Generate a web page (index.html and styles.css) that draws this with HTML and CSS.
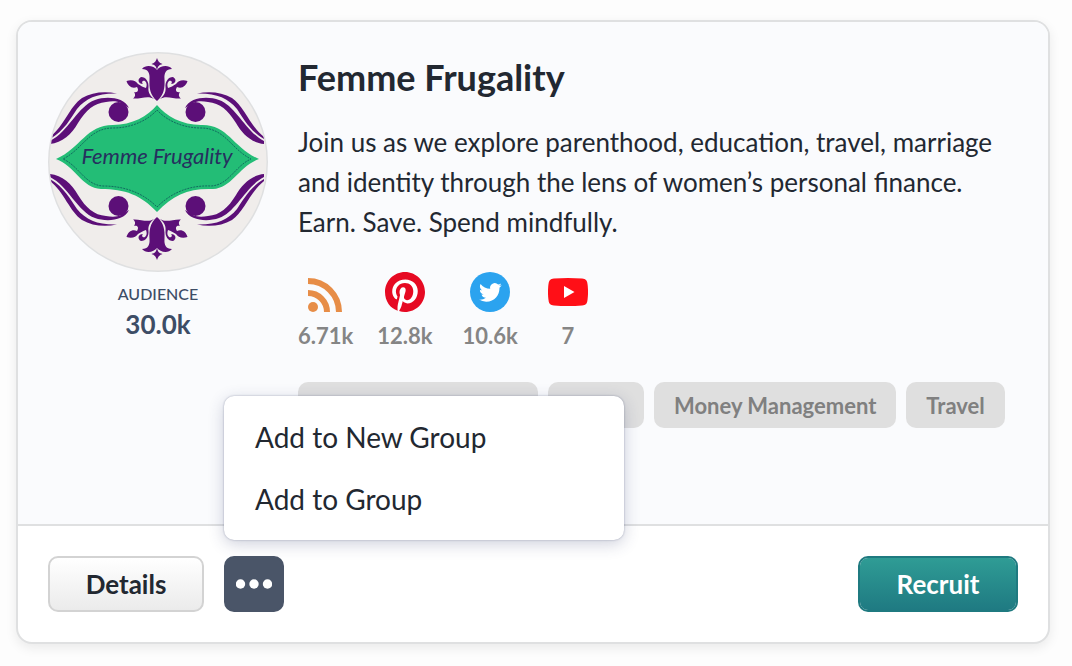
FILE: index.html
```html
<!DOCTYPE html>
<html lang="en">
<head>
<meta charset="utf-8">
<title>Femme Frugality</title>
<link rel="stylesheet" href="styles.css">
</head>
<body>
<article class="card">
  <div class="card-main">
    <aside class="profile">
      <svg class="avatar" viewBox="0 0 220 220" role="img" aria-label="Femme Frugality logo">
        <defs>
          <clipPath id="disc"><circle cx="110" cy="110" r="108.500"/></clipPath>
          <g id="quarter">
            <path d="M69 41.500C57 39 44 40 34 46C22 54 16 74 2 85V87C16 79 23 66 29 57C38 46 50 41 69 41.500Z"/>
            <path d="M81 56C76 45 58 44 47 48C30 54 20 80 2 89V92C14 91 24 82 30 71C38 58 46 51 58 50C64 49 69 49 73 51Z"/>
            <circle cx="70.500" cy="60" r="10"/>
            <path d="M109 6C108 9 107 11 103.500 12C107 13 108 14 109 18Z"/>
            <path d="M109 18C106 14 98 12 94 17C100 17 102 21 101.500 27C101 36 102 43 109 49Z"/>
            <path d="M106 47C100 43 93 47 85 46.500C87 45 88 43 86 40C90 41 91 38 89 35C84 37 80 34 78.500 29C84 27 88 29 90 32C93 34 95 35 98 36C99 33 99 31 97 29C95 28 93 30 95 32C90 32 89 27 93 25C98 25 101 30 100.500 35C100 39 101 43 106 47Z"/>
          </g>
          <g id="half">
            <use href="#quarter"/>
            <use href="#quarter" transform="translate(218 0) scale(-1 1)"/>
          </g>
        </defs>
        <circle cx="110" cy="110" r="110" fill="#dfe0e1"/>
        <g clip-path="url(#disc)">
          <rect width="220" height="220" fill="#f0edeb"/>
          <g fill="#5c0f78">
            <use href="#half"/>
            <use href="#half" transform="translate(0 214) scale(1 -1)"/>
          </g>
          <path fill="#23bd76" d="M109 53C118 64 134 73 153 73C180 72 185 96 211 107C191 114 184 136 165 137C141 136 125 143 109 160C93 143 77 137 53 137C34 136 27 114 8 107C33 96 38 73 65 73C84 73 100 64 109 53Z"/>
          <path class="stitch" d="M109 58C118 68 134 76 153 76C177 76 183 97 203 107C187 114 181 133 163 134C141 133 123 141 109 155C95 141 77 134 55 134C37 133 31 114 15 107C35 97 41 76 65 76C84 76 100 68 109 58Z"/>
        </g>
        <text class="avatar-text" x="109" y="112" text-anchor="middle">Femme Frugality</text>
      </svg>
      <div class="audience-label">AUDIENCE</div>
      <div class="audience-value">30.0k</div>
    </aside>
    <div class="content">
      <h1 class="title">Femme Frugality</h1>
      <p class="description">Join us as we explore parenthood, education, travel, marriage and identity through the lens of women’s personal finance. Earn. Save. Spend mindfully.</p>
      <ul class="stats">
        <li class="stat">
          <svg class="stat-icon" viewBox="0 0 40 40" aria-label="Blog">
            <g fill="none" stroke="#e78d47" stroke-width="6"><path d="M2 21A19 19 0 0 1 21 40"/><path d="M2 9A31 31 0 0 1 33 40"/></g>
            <circle cx="7" cy="35" r="5" fill="#e78d47"/>
          </svg>
          <span>6.71k</span>
        </li>
        <li class="stat">
          <svg class="stat-icon" viewBox="0 0 496 496" aria-label="Pinterest">
            <circle cx="248" cy="248" r="244" fill="#fff"/>
            <path fill="#e60a23" d="M496 248c0 137-111 248-248 248-25.600 0-50.200-3.900-73.400-11.100 10.100-16.500 25.200-43.500 30.800-65 3-11.600 15.400-59 15.400-59 8.100 15.400 31.700 28.500 56.800 28.500 74.800 0 128.700-68.800 128.700-154.300 0-81.900-66.900-143.200-152.900-143.200-107 0-163.900 71.800-163.900 150.100 0 36.400 19.400 81.700 50.300 96.100 4.700 2.200 7.200 1.200 8.300-3.300.8-3.400 5-20.300 6.900-28.100.6-2.500.3-4.700-1.700-7.100-10.100-12.500-18.300-35.300-18.300-56.600 0-54.700 41.400-107.600 112-107.600 60.900 0 103.600 41.500 103.600 100.900 0 67.100-33.900 113.600-78 113.600-24.300 0-42.600-20.100-36.700-44.800 7-29.500 20.500-61.300 20.500-82.600 0-19-10.200-34.900-31.400-34.900-24.900 0-44.900 25.700-44.900 60.200 0 22 7.400 36.800 7.400 36.800s-24.500 103.800-29 123.200c-5 21.400-3 51.600-.9 71.200C65.400 450.900 0 361.100 0 248 0 111 111 0 248 0s248 111 248 248z"/>
          </svg>
          <span>12.8k</span>
        </li>
        <li class="stat stat-spaced">
          <svg class="stat-icon" viewBox="0 0 40 40" aria-label="Twitter">
            <circle cx="20" cy="20" r="20" fill="#2ba3ef"/>
            <path fill="#fff" transform="translate(9 9) scale(.95)" d="M23.950 4.570a10 10 0 0 1-2.820.770 4.960 4.960 0 0 0 2.160-2.720c-.950.550-2 .950-3.130 1.180a4.920 4.920 0 0 0-8.380 4.480C7.690 8.090 4.070 6.130 1.640 3.160a4.820 4.820 0 0 0-.670 2.480c0 1.710.870 3.210 2.190 4.100a4.900 4.900 0 0 1-2.230-.620v.060a4.920 4.920 0 0 0 3.950 4.830 5 5 0 0 1-2.210.080 4.940 4.940 0 0 0 4.600 3.420A9.870 9.870 0 0 1 0 19.540a14 14 0 0 0 7.550 2.210c9.050 0 14-7.500 14-13.980 0-.210 0-.420-.020-.630a9.940 9.940 0 0 0 2.420-2.570z"/>
          </svg>
          <span>10.6k</span>
        </li>
        <li class="stat stat-spaced">
          <svg class="stat-icon" viewBox="0 0 40 40" aria-label="YouTube">
            <path fill="#ff0f17" d="M6 6.500C15 5.800 25 5.800 34 6.500C38 7 39 8.500 39.500 12C40.200 17 40.200 23 39.500 28C39 31.500 38 33 34 33.500C25 34.200 15 34.200 6 33.500C2 33 1 31.500.5 28C-.2 23-.2 17 .5 12C1 8.500 2 7 6 6.500Z"/>
            <path fill="#fff" d="M16 14L26.500 20L16 26Z"/>
          </svg>
          <span>7</span>
        </li>
      </ul>
      <ul class="tags">
        <li class="tag tag-long"></li>
        <li class="tag tag-short"></li>
        <li class="tag">Money Management</li>
        <li class="tag">Travel</li>
      </ul>
    </div>
  </div>
  <footer class="card-footer">
    <button class="button button-details" type="button">Details</button>
    <div class="more">
      <button class="button button-more" type="button" aria-label="More actions" aria-expanded="true">
        <svg class="dots" viewBox="0 0 36 10"><circle cx="4.500" cy="5" r="4.700"/><circle cx="18" cy="5" r="4.700"/><circle cx="31.500" cy="5" r="4.700"/></svg>
      </button>
      <div class="menu">
        <button class="menu-item" type="button">Add to New Group</button>
        <button class="menu-item" type="button">Add to Group</button>
      </div>
    </div>
    <button class="button button-recruit" type="button">Recruit</button>
  </footer>
</article>
</body>
</html>
```

FILE: styles.css
```css
* {
  box-sizing: border-box;
}

body {
  margin: 0;
  padding: 20px 22px 22px 16px;
  background: #fdfdfd;
  color: #222831;
  font-family: Lato, "Liberation Sans", sans-serif;
}

ul {
  margin: 0;
  padding: 0;
  list-style: none;
}

button {
  font-family: inherit;
  color: inherit;
  cursor: pointer;
}

.card {
  border: 2px solid #dfe0e1;
  border-radius: 16px;
  background: #fff;
  box-shadow: 0 4px 12px rgba(0, 0, 0, 0.08);
}

.card-main {
  display: flex;
  gap: 30px;
  min-height: 502px;
  padding: 30px;
  border-radius: 14px 14px 0 0;
  background: #fafbfd;
}

.profile {
  flex: none;
  width: 220px;
  color: #3d4d66;
  text-align: center;
}

.avatar {
  display: block;
  width: 220px;
  height: 220px;
}

.stitch {
  fill: none;
  stroke: #126b60;
  stroke-width: 1;
  stroke-dasharray: 2 1;
}

.avatar-text {
  fill: #26305f;
  font-size: 22px;
  font-style: italic;
}

.audience-label {
  margin-top: 12px;
  font-size: 16px;
  font-weight: 500;
  line-height: 20px;
}

.audience-value {
  margin-top: 4px;
  font-size: 26px;
  font-weight: 700;
  line-height: 32px;
}

.content {
  flex: 1;
  min-width: 0;
}

.title {
  margin: 4px 0 24px;
  font-size: 36px;
  font-weight: 700;
  line-height: 42px;
}

.description {
  margin: 0 0 30px;
  font-size: 26px;
  line-height: 40px;
}

.stats {
  display: flex;
  gap: 24px;
  color: #858585;
  font-size: 22px;
  font-weight: 700;
  line-height: 28px;
}

.stat {
  display: flex;
  flex-direction: column;
  align-items: center;
  gap: 10px;
}

.stat-spaced {
  margin-left: 6px;
}

.stat-icon {
  display: block;
  width: 40px;
  height: 40px;
}

.tags {
  display: flex;
  flex-wrap: wrap;
  gap: 10px;
  margin-top: 32px;
}

.tag {
  height: 46px;
  padding: 0 20px;
  border-radius: 10px;
  background: #dfdfdf;
  color: #808080;
  font-size: 22px;
  font-weight: 700;
  line-height: 48px;
}

.tag-long {
  width: 240px;
}

.tag-short {
  width: 96px;
}

.card-footer {
  display: flex;
  align-items: center;
  gap: 20px;
  padding: 30px;
  border-top: 2px solid #dfe0e1;
}

.button {
  height: 56px;
  padding: 0;
  border: 2px solid #d3d3d3;
  border-radius: 10px;
  font-size: 26px;
  font-weight: 700;
  line-height: 52px;
}

.button-details {
  width: 156px;
  background: linear-gradient(#fff, #ebebeb);
}

.more {
  position: relative;
}

.button-more {
  display: flex;
  align-items: center;
  justify-content: center;
  width: 60px;
  border-color: #4a5568;
  background: #4a5568;
}

.dots {
  width: 36px;
  height: 10px;
  fill: #fff;
}

.menu {
  position: absolute;
  bottom: 72px;
  left: 0;
  width: 400px;
  padding: 10px 0;
  border-radius: 10px;
  background: #fff;
  box-shadow: 0 0 2px rgba(40, 50, 90, 0.4), 0 4px 16px rgba(50, 60, 110, 0.24);
}

.menu-item {
  display: block;
  width: 100%;
  height: 62px;
  padding: 0 31px;
  border: 0;
  background: none;
  font-size: 28px;
  line-height: 62px;
  text-align: left;
}

.button-recruit {
  width: 160px;
  margin-left: auto;
  border-color: #1f7a80;
  background: linear-gradient(#2f9c95, #1f7a82) padding-box;
  color: #fff;
}
```
